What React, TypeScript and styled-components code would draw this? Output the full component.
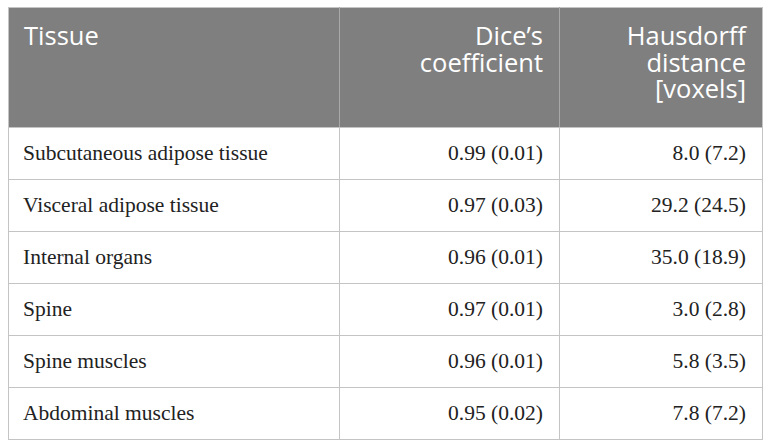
import React from "react";
import styled, { createGlobalStyle } from "styled-components";

const Global = createGlobalStyle`
  html, body { margin: 0; padding: 0; background: #ffffff; }
`;

const Page = styled.div`
  padding: 7px 10px 0 8px;
`;

const Table = styled.table`
  border-collapse: collapse;
  width: 755px;
  table-layout: fixed;
  border: 1px solid #c4c4c4;
`;

const HeadRow = styled.tr`
  height: 120px;
  background: #7f7f7f;
`;

const HeadCell = styled.th<{ $align: "left" | "right"; $w: number }>`
  width: ${(p) => p.$w}px;
  box-sizing: border-box;
  vertical-align: top;
  text-align: ${(p) => p.$align};
  font-family: "Open Sans", "Liberation Sans", sans-serif;
  font-weight: 400;
  font-size: 25.5px;
  line-height: 26.5px;
  color: #ffffff;
  padding: 14px 16px 0 15px;
  border-left: 1px solid #a8a8a8;
  border-bottom: 1px solid #c4c4c4;
  &:first-child { border-left: none; }
`;

const BodyRow = styled.tr`
  height: 52px;
`;

const Cell = styled.td<{ $align: "left" | "right" }>`
  box-sizing: border-box;
  text-align: ${(p) => p.$align};
  vertical-align: middle;
  font-family: "Liberation Serif", "Times New Roman", serif;
  font-size: 21.5px;
  color: #222222;
  padding: 0 16px 0 14px;
  border: 1px solid #c4c4c4;
`;

const rows: [string, string, string][] = [
  ["Subcutaneous adipose tissue", "0.99 (0.01)", "8.0 (7.2)"],
  ["Visceral adipose tissue", "0.97 (0.03)", "29.2 (24.5)"],
  ["Internal organs", "0.96 (0.01)", "35.0 (18.9)"],
  ["Spine", "0.97 (0.01)", "3.0 (2.8)"],
  ["Spine muscles", "0.96 (0.01)", "5.8 (3.5)"],
  ["Abdominal muscles", "0.95 (0.02)", "7.8 (7.2)"],
];

export default function App() {
  return (
    <>
      <Global />
      <Page>
        <Table>
          <thead>
            <HeadRow>
              <HeadCell $align="left" $w={331}>Tissue</HeadCell>
              <HeadCell $align="right" $w={220}>
                Dice’s
                <br />
                coefficient
              </HeadCell>
              <HeadCell $align="right" $w={203}>
                Hausdorff
                <br />
                distance
                <br />
                [voxels]
              </HeadCell>
            </HeadRow>
          </thead>
          <tbody>
            {rows.map((r) => (
              <BodyRow key={r[0]}>
                <Cell $align="left">{r[0]}</Cell>
                <Cell $align="right">{r[1]}</Cell>
                <Cell $align="right">{r[2]}</Cell>
              </BodyRow>
            ))}
          </tbody>
        </Table>
      </Page>
    </>
  );
}
